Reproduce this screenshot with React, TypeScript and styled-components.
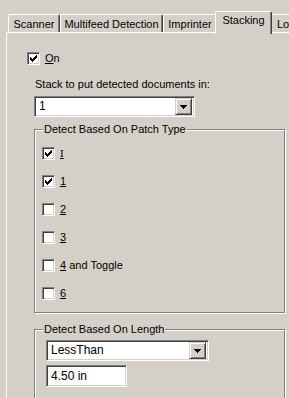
import React from "react";
import styled, { createGlobalStyle } from "styled-components";

const GlobalStyle = createGlobalStyle`
  html, body {
    margin: 0;
    padding: 0;
    background: #d4d0c8;
  }
`;

const tabs = [
  { label: "Scanner", width: 52 },
  { label: "Multifeed Detection", width: 103 },
  { label: "Imprinter", width: 54 },
  { label: "Stacking", width: 57, active: true },
  { label: "Lo", width: 40, clipped: true },
];

const patchTypes = [
  { key: "I", rest: "", checked: true },
  { key: "1", rest: "", checked: true },
  { key: "2", rest: "", checked: false },
  { key: "3", rest: "", checked: false },
  { key: "4", rest: " and Toggle", checked: false },
  { key: "6", rest: "", checked: false },
];

// classic 7x7 pixel check mark
const CHECK =
  "M6 0h1v1H6zM5 1h2v1H5zM0 2h1v1H0zM4 2h3v1H4zM0 3h2v1H0zM3 3h3v1H3zM0 4h5v1H0zM1 5h3v1H1zM2 6h1v1H2z";

const CheckBox = ({ checked }: { checked: boolean }) => (
  <Box>
    {checked && (
      <svg width="7" height="7" viewBox="0 0 7 7" shapeRendering="crispEdges">
        <path d={CHECK} fill="#000" />
      </svg>
    )}
  </Box>
);

const Combo = ({ value, width }: { value: string; width: number }) => (
  <ComboBox $width={width}>
    <ComboText>{value}</ComboText>
    <DropButton>
      <svg width="7" height="4" viewBox="0 0 7 4" shapeRendering="crispEdges">
        <path d="M0 0h7v1H0zM1 1h5v1H1zM2 2h3v1H2zM3 3h1v1H3z" fill="#000" />
      </svg>
    </DropButton>
  </ComboBox>
);

export default function App() {
  return (
    <>
      <GlobalStyle />
      <Dialog>
        <TabStrip>
          {tabs.map((t) => (
            <TabItem
              key={t.label}
              $width={t.width}
              $active={!!t.active}
              $clipped={!!t.clipped}
            >
              {t.label}
            </TabItem>
          ))}
        </TabStrip>
        <Panel>
          <OnRow>
            <CheckBox checked />
            <Label>
              <u>O</u>n
            </Label>
          </OnRow>
          <Section>
            <Caption>Stack to put detected documents in:</Caption>
            <Combo value="1" width={161} />
            <Group $mt={12}>
              <Legend>Detect Based On Patch Type</Legend>
              <CheckList>
                {patchTypes.map((p) => (
                  <Row key={p.key}>
                    <CheckBox checked={p.checked} />
                    <Label $serif={p.key === "I"}>
                      <u>{p.key}</u>
                      {p.rest}
                    </Label>
                  </Row>
                ))}
              </CheckList>
            </Group>
            <Group $mt={16}>
              <Legend>Detect Based On Length</Legend>
              <LengthFields>
                <Combo value="LessThan" width={163} />
                <TextInput>4.50 in</TextInput>
              </LengthFields>
            </Group>
          </Section>
        </Panel>
      </Dialog>
    </>
  );
}

const Dialog = styled.div`
  width: 289px;
  height: 398px;
  overflow: hidden;
  background: #d4d0c8;
  font-family: "Liberation Sans", Arial, sans-serif;
  font-size: 11px;
  line-height: 13px;
  color: #000;
  display: flex;
  flex-direction: column;
`;

const TabStrip = styled.div`
  display: flex;
  align-items: flex-end;
  padding: 11px 0 0 8px;
  height: 21px;
  flex-shrink: 0;
`;

const TabItem = styled.div<{ $width: number; $active: boolean; $clipped: boolean }>`
  box-sizing: border-box;
  flex-shrink: 0;
  width: ${(p) => p.$width}px;
  height: ${(p) => (p.$active ? 23 : 18)}px;
  margin: ${(p) => (p.$active ? "0 -2px -2px" : "0")};
  position: relative;
  z-index: ${(p) => (p.$active ? 2 : 1)};
  background: #d4d0c8;
  border-top: 1px solid #fff;
  border-left: 1px solid #fff;
  border-right: 1px solid #404040;
  border-radius: 2px 2px 0 0;
  box-shadow: inset -1px 0 0 #808080;
  display: flex;
  justify-content: ${(p) => (p.$clipped ? "flex-start" : "center")};
  padding: ${(p) => (p.$active ? 2 : 3)}px 0 0 ${(p) => (p.$clipped ? 6 : 0)}px;
  white-space: nowrap;
`;

const Panel = styled.div`
  flex: 1;
  margin-left: 6px;
  width: 320px;
  border-top: 1px solid #fff;
  border-left: 1px solid #fff;
  display: flex;
  flex-direction: column;
`;

const OnRow = styled.div`
  display: flex;
  align-items: center;
  gap: 5px;
  margin: 19px 0 0 20px;
  height: 13px;
`;

const Row = styled.div`
  display: flex;
  align-items: center;
  gap: 5px;
  height: 13px;
`;

const Box = styled.div`
  box-sizing: border-box;
  width: 13px;
  height: 13px;
  flex-shrink: 0;
  background: #fff;
  border-top: 1px solid #808080;
  border-left: 1px solid #808080;
  border-right: 1px solid #fff;
  border-bottom: 1px solid #fff;
  box-shadow: inset 1px 1px 0 #404040, inset -1px -1px 0 #d4d0c8;
  display: flex;
  align-items: center;
  justify-content: center;
`;

const Label = styled.span<{ $serif?: boolean }>`
  white-space: nowrap;
  u {
    font-family: ${(p) =>
      p.$serif ? '"Liberation Serif", serif' : "inherit"};
    text-underline-offset: 1px;
  }
`;

const Section = styled.div`
  display: flex;
  flex-direction: column;
  align-items: flex-start;
  margin-left: 27px;
  width: 251px;
`;

const Caption = styled.div`
  margin: 13px 0 5px 1px;
`;

const ComboBox = styled.div<{ $width: number }>`
  box-sizing: border-box;
  width: ${(p) => p.$width}px;
  height: 21px;
  background: #fff;
  border-top: 1px solid #808080;
  border-left: 1px solid #808080;
  border-right: 1px solid #fff;
  border-bottom: 1px solid #fff;
  box-shadow: inset 1px 1px 0 #404040, inset -1px -1px 0 #d4d0c8;
  display: flex;
  align-items: center;
  padding: 2px;
`;

const ComboText = styled.div`
  flex: 1;
  padding-left: 2px;
  font-size: 12px;
`;

const DropButton = styled.div`
  box-sizing: border-box;
  width: 17px;
  height: 17px;
  background: #d4d0c8;
  border-top: 1px solid #d4d0c8;
  border-left: 1px solid #d4d0c8;
  border-right: 1px solid #404040;
  border-bottom: 1px solid #404040;
  box-shadow: inset 1px 1px 0 #fff, inset -1px -1px 0 #808080;
  display: flex;
  align-items: center;
  justify-content: center;
`;

const Group = styled.div<{ $mt: number }>`
  box-sizing: border-box;
  align-self: stretch;
  margin-top: ${(p) => p.$mt}px;
  border: 1px solid #808080;
  box-shadow: inset 1px 1px 0 #fff, 1px 1px 0 #fff;
  display: flex;
  flex-direction: column;
  align-items: flex-start;
`;

const Legend = styled.div`
  margin: -7px 0 0 8px;
  padding: 0 1px;
  background: #d4d0c8;
`;

const CheckList = styled.div`
  display: flex;
  flex-direction: column;
  gap: 15px;
  padding: 11px 0 12px 7px;
`;

const LengthFields = styled.div`
  display: flex;
  flex-direction: column;
  gap: 4px;
  padding: 4px 0 20px 11px;
`;

const TextInput = styled.div`
  box-sizing: border-box;
  width: 81px;
  height: 22px;
  background: #fff;
  border-top: 1px solid #808080;
  border-left: 1px solid #808080;
  border-right: 1px solid #fff;
  border-bottom: 1px solid #fff;
  box-shadow: inset 1px 1px 0 #404040, inset -1px -1px 0 #d4d0c8;
  padding: 4px 0 0 4px;
  font-size: 12px;
`;
